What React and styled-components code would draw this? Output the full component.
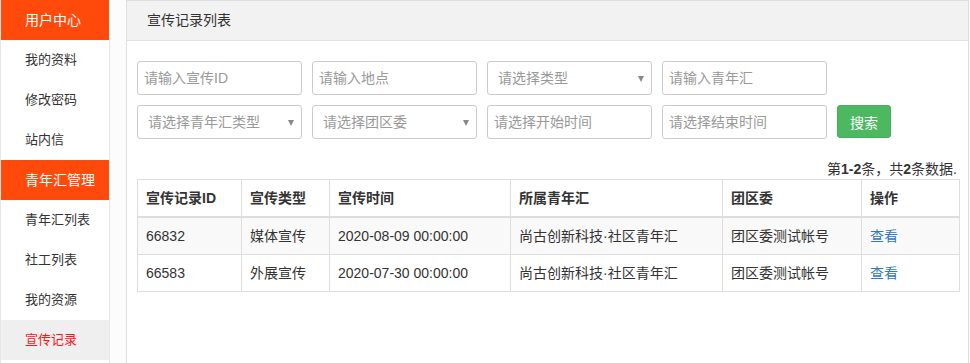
import styled, { createGlobalStyle } from "styled-components";

const GlobalStyle = createGlobalStyle`
  body {
    margin: 0;
    background: #fcfcfc;
    font-family: "Liberation Sans", "Noto Sans CJK SC", sans-serif;
    color: #333;
  }
`;

const Layout = styled.div`
  display: flex;
  align-items: flex-start;
  gap: 16px;
  min-height: 363px;
  overflow: hidden;
  height: 363px;
`;

const Sidebar = styled.div`
  width: 108px;
  min-height: 363px;
  background: #fff;
  border-left: 1px solid #e6e6e6;
  border-right: 1px solid #e6e6e6;
`;

const GroupTitle = styled.div`
  height: 40px;
  line-height: 40px;
  padding-left: 24px;
  background: #ff4a0c;
  color: #fff;
  font-size: 14px;
`;

const NavItem = styled.div`
  height: 40px;
  line-height: 40px;
  padding-left: 24px;
  font-size: 13px;
  color: ${({ active }) => (active ? "#ff1414" : "#333")};
  background: ${({ active }) => (active ? "#efefef" : "#fff")};
`;

const Panel = styled.div`
  width: 841px;
  background: #fff;
  border: 1px solid #dedede;
`;

const PanelHeader = styled.div`
  height: 39px;
  line-height: 39px;
  padding-left: 20px;
  background: #f2f2f2;
  border-bottom: 1px solid #e2e2e2;
  font-size: 14px;
  color: #333;
`;

const PanelBody = styled.div`
  padding: 20px 10px 100px;
`;

const Form = styled.div`
  display: grid;
  grid-template-columns: repeat(4, 165px) 54px;
  column-gap: 10px;
  row-gap: 10px;
`;

const Input = styled.input`
  box-sizing: border-box;
  width: 165px;
  height: 34px;
  padding: 0 6px;
  border: 1px solid #ccc;
  border-radius: 3px;
  font-family: inherit;
  font-size: 14px;
  color: #333;
  outline: none;
  &::placeholder {
    color: #999;
  }
`;

const SelectBox = styled.div`
  position: relative;
  box-sizing: border-box;
  width: 165px;
  height: 34px;
  line-height: 32px;
  padding: 0 10px;
  border: 1px solid #ccc;
  border-radius: 3px;
  font-size: 14px;
  color: #999;
`;

const Caret = styled.span`
  position: absolute;
  right: 7px;
  top: 14px;
  width: 0;
  height: 0;
  border-left: 3.5px solid transparent;
  border-right: 3.5px solid transparent;
  border-top: 6px solid #888;
`;

const SearchButton = styled.button`
  width: 54px;
  height: 33px;
  border: 1px solid #46ae5a;
  border-radius: 3px;
  background: #4cb961;
  color: #fff;
  font-family: inherit;
  font-size: 14px;
  padding: 0;
`;

const Summary = styled.div`
  margin-top: 21px;
  margin-bottom: 1px;
  line-height: 18px;
  text-align: right;
  font-size: 14px;
  padding-right: 1px;
  b {
    font-weight: bold;
  }
`;

const Table = styled.table`
  width: 822px;
  border-collapse: collapse;
  table-layout: fixed;
  font-size: 14px;
  color: #333;
`;

const Th = styled.th`
  text-align: left;
  font-weight: bold;
  padding: 8px;
  line-height: 20px;
  border: 1px solid #ddd;
  border-bottom: 2px solid #ddd;
`;

const Row = styled.tr`
  background: ${({ striped }) => (striped ? "#f9f9f9" : "#fff")};
`;

const Td = styled.td`
  padding: 8px;
  line-height: 20px;
  border: 1px solid #ddd;
  white-space: nowrap;
`;

const Link = styled.a`
  color: #337ab7;
  text-decoration: none;
`;

const columns = [
  { title: "宣传记录ID", width: 104 },
  { title: "宣传类型", width: 88 },
  { title: "宣传时间", width: 181 },
  { title: "所属青年汇", width: 212 },
  { title: "团区委", width: 139 },
  { title: "操作", width: 98 },
];

const records = [
  { id: "66832", type: "媒体宣传", time: "2020-08-09 00:00:00", club: "尚古创新科技·社区青年汇", league: "团区委测试帐号" },
  { id: "66583", type: "外展宣传", time: "2020-07-30 00:00:00", club: "尚古创新科技·社区青年汇", league: "团区委测试帐号" },
];

const Select = ({ label }) => (
  <SelectBox>
    {label}
    <Caret />
  </SelectBox>
);

const App = () => (
  <>
    <GlobalStyle />
    <Layout>
      <Sidebar>
        <GroupTitle>用户中心</GroupTitle>
        <NavItem>我的资料</NavItem>
        <NavItem>修改密码</NavItem>
        <NavItem>站内信</NavItem>
        <GroupTitle>青年汇管理</GroupTitle>
        <NavItem>青年汇列表</NavItem>
        <NavItem>社工列表</NavItem>
        <NavItem>我的资源</NavItem>
        <NavItem active>宣传记录</NavItem>
      </Sidebar>
      <Panel>
        <PanelHeader>宣传记录列表</PanelHeader>
        <PanelBody>
          <Form>
            <Input placeholder="请输入宣传ID" />
            <Input placeholder="请输入地点" />
            <Select label="请选择类型" />
            <Input placeholder="请输入青年汇" />
            <span />
            <Select label="请选择青年汇类型" />
            <Select label="请选择团区委" />
            <Input placeholder="请选择开始时间" />
            <Input placeholder="请选择结束时间" />
            <SearchButton>搜索</SearchButton>
          </Form>
          <Summary>
            第<b>1-2</b>条，共<b>2</b>条数据.
          </Summary>
          <Table>
            <colgroup>
              {columns.map((c) => (
                <col key={c.title} style={{ width: c.width }} />
              ))}
            </colgroup>
            <thead>
              <tr>
                {columns.map((c) => (
                  <Th key={c.title}>{c.title}</Th>
                ))}
              </tr>
            </thead>
            <tbody>
              {records.map((r, i) => (
                <Row key={r.id} striped={i % 2 === 0}>
                  <Td>{r.id}</Td>
                  <Td>{r.type}</Td>
                  <Td>{r.time}</Td>
                  <Td>{r.club}</Td>
                  <Td>{r.league}</Td>
                  <Td>
                    <Link href="#">查看</Link>
                  </Td>
                </Row>
              ))}
            </tbody>
          </Table>
        </PanelBody>
      </Panel>
    </Layout>
  </>
);

export default App;
